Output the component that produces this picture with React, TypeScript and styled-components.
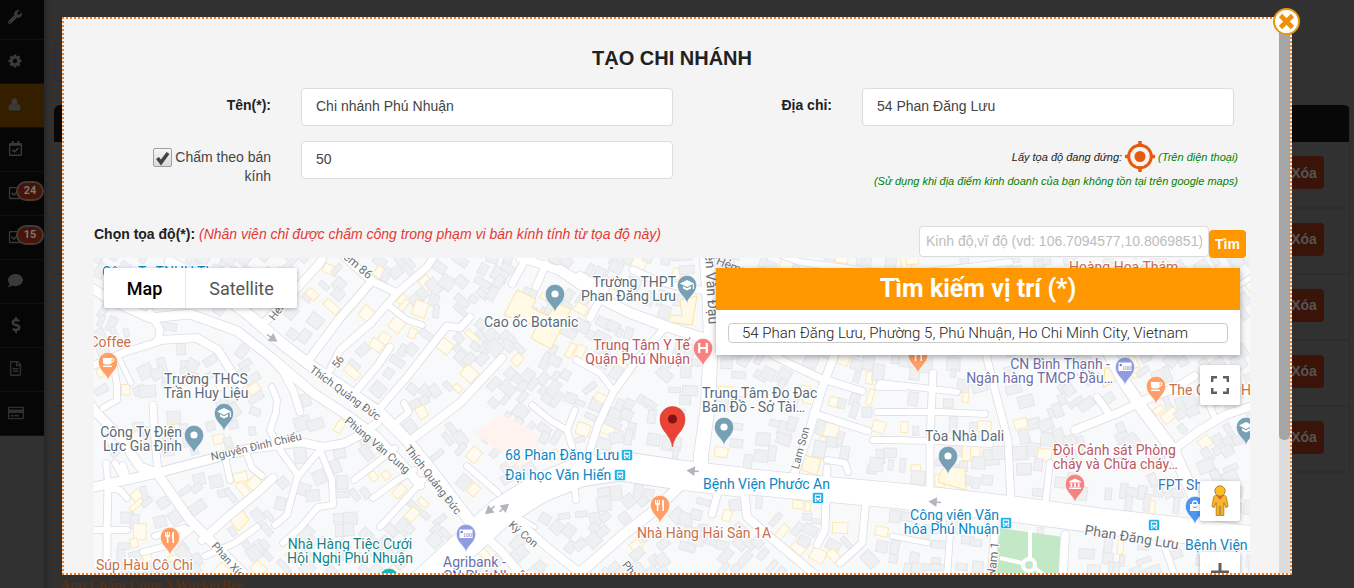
import React from "react";
import styled, { createGlobalStyle, css } from "styled-components";
import {
  FaWrench,
  FaRegCalendarCheck,
  FaRegCheckSquare,
  FaComment,
  FaDollarSign,
  FaRegFileAlt,
  FaRegCreditCard,
} from "react-icons/fa";

const sans = `"Liberation Sans", Arial, sans-serif`;
const roboto = `Roboto, "Noto Sans", sans-serif`;

const GlobalStyle = createGlobalStyle`
  * { box-sizing: border-box; }
  body {
    margin: 0;
    background: #313131;
    color: #212121;
    font-family: ${sans};
    font-size: 14px;
    overflow: hidden;
  }
  button, input { font-family: inherit; margin: 0; }
`;

/* ---------- dimmed page behind the dialog ---------- */

const Page = styled.div`
  display: flex;
  align-items: flex-start;
  min-height: 100vh;
`;

const Sidebar = styled.nav`
  flex: none;
  width: 44px;
  margin-top: -4px;
  background: #060606;
`;

const SideLink = styled.a<{ $active?: boolean; $faint?: boolean }>`
  position: relative;
  display: flex;
  align-items: center;
  height: 44px;
  padding: 0 0 2px 8px;
  border-bottom: 1px solid #101010;
  background: ${(p) => (p.$active ? "#331f00" : "transparent")};
  color: ${(p) => (p.$faint ? "#303030" : "#3a3a3a")};
  font-size: 14px;
`;

const Badge = styled.span`
  position: absolute;
  top: 9px;
  right: 0;
  width: 28px;
  height: 20px;
  border: 2px solid #443a36;
  border-radius: 10px;
  background: #461507;
  color: #777;
  font: bold 11px/16px ${roboto};
  text-align: center;
`;

const Main = styled.main`
  flex: 1;
  display: flex;
  flex-direction: column;
  padding: 43px 4px 0 10px;
  box-shadow: inset 5px 0 5px -3px #262626;
`;

const FilterBox = styled.div`
  width: 40%;
  height: 38px;
  margin-bottom: 24px;
  border: 1px solid #2a2a2f;
  border-radius: 4px;
`;

const PageTable = styled.table`
  width: 100%;
  border-collapse: collapse;
  border-right: 1px solid #2c2c2c;
`;

const HeadCell = styled.th`
  height: 37px;
  padding: 0;
  background: #080808;
  border-radius: 6px 6px 0 0;
`;

const PageCell = styled.td`
  height: 66px;
  padding: 0 25px 4px 0;
  border-bottom: 2px solid #2d2d2d;
  text-align: right;
`;

const DeleteButton = styled.button`
  width: 40px;
  height: 33px;
  padding: 0;
  border: 0;
  border-radius: 4px;
  background: #3a1408;
  color: #555;
  font-size: 14px;
  font-weight: bold;
`;

const AppName = styled.footer`
  margin-top: 104px;
  padding-left: 6px;
  color: #553117;
  font: bold 14px/18px "Liberation Serif", serif;
`;

/* ---------- dialog ---------- */

const Dialog = styled.section`
  position: fixed;
  inset: 17px 62px 13px;
  display: flex;
  border: 2px dotted #f0802a;
  background: #f4f4f4;
`;

const CloseButton = styled.button`
  position: absolute;
  top: -11px;
  right: -10px;
  display: grid;
  place-items: center;
  width: 27px;
  height: 27px;
  padding: 0;
  border: 2px solid #e8960f;
  border-radius: 50%;
  background: #fff;
`;

const Body = styled.div`
  flex: 1;
  min-width: 0;
  overflow: hidden;
  padding: 27px 29px 0 30px;
`;

const ScrollTrack = styled.div`
  flex: none;
  width: 11px;
  background: #dcdcdc;
`;

const ScrollThumb = styled.div`
  height: 76%;
  border-radius: 0 0 5px 5px;
  background: #a5a5a5;
`;

const Title = styled.h1`
  margin: 0 0 18px;
  font-size: 20px;
  line-height: 24px;
  text-align: center;
`;

const FormGrid = styled.form`
  display: grid;
  grid-template-columns: 177fr 372fr 129fr 372fr;
  gap: 15px 30px;
  padding-right: 16px;
`;

const FieldLabel = styled.label`
  padding-top: 8px;
  font-weight: bold;
  line-height: 18px;
  text-align: right;
`;

const CheckLabel = styled.label`
  display: flex;
  gap: 3px;
  justify-self: end;
  width: 118px;
  padding-top: 7px;
  color: #444;
  line-height: 19px;
  text-align: right;
`;

const CheckBox = styled.input`
  appearance: none;
  flex: none;
  width: 19px;
  height: 19px;
  border: 1px solid #a0a0a0;
  border-radius: 2px;
  background: url("data:image/svg+xml,%3Csvg xmlns='http://www.w3.org/2000/svg' viewBox='0 0 17 17'%3E%3Cpath d='M3.5 9l3.5 4.500L14 4' fill='none' stroke='%23424242' stroke-width='3.600'/%3E%3C/svg%3E"),
    linear-gradient(#f6f6f6, #d9d9d9);
`;

const inputFrame = css`
  border: 1px solid #dcdcdc;
  border-radius: 4px;
  background: #fff;
  outline: 0;
`;

const TextInput = styled.input`
  ${inputFrame}
  width: 100%;
  height: 38px;
  padding: 0 14px 2px;
  color: #444;
  font-size: 14px;
`;

const LocateHint = styled.div`
  grid-column: 3 / 5;
  margin-right: -4px;
  color: #008000;
  font-size: 11px;
  font-style: italic;
  line-height: 18px;
  text-align: right;
`;

const LocateRow = styled.div`
  display: flex;
  align-items: center;
  justify-content: flex-end;
  gap: 3px;
  height: 31px;
  color: #222;
`;

const LocateButton = styled.button`
  width: 30px;
  height: 31px;
  padding: 0;
  border: 0;
  background: none;
`;

const Green = styled.span`
  color: #008000;
`;

const CoordRow = styled.div`
  display: flex;
  align-items: flex-end;
  height: 32px;
  margin-top: 36px;
  padding-right: 4px;
`;

const CoordText = styled.p`
  flex: 1;
  align-self: flex-start;
  margin: 0;
  font-weight: bold;
  line-height: 16px;
`;

const Note = styled.em`
  color: #e53935;
  font-weight: normal;
`;

const CoordInput = styled.input`
  ${inputFrame}
  width: 290px;
  height: 31px;
  align-self: flex-start;
  padding: 0 6px 1px;
  font-size: 14px;
  &::placeholder { color: #bdbdbd; }
`;

const FindButton = styled.button`
  width: 37px;
  height: 28px;
  padding: 0;
  border: 0;
  border-radius: 4px;
  background: #ff9800;
  color: #fff;
  font-size: 14px;
  font-weight: bold;
`;

/* ---------- map ---------- */

const MapFrame = styled.div`
  position: relative;
  height: 380px;
  overflow: hidden;
  font-family: ${roboto};
`;

const MapCanvas = styled.svg`
  display: block;
  width: 100%;
  height: 100%;
  font-family: ${roboto};
`;

const MapTypes = styled.div`
  position: absolute;
  top: 10px;
  left: 10px;
  display: flex;
  height: 40px;
  border-radius: 2px;
  background: #fff;
  box-shadow: 0 1px 4px rgba(0, 0, 0, 0.3);
`;

const MapTypeButton = styled.button<{ $on?: boolean }>`
  width: ${(p) => (p.$on ? 82 : 111)}px;
  padding: 0;
  border: 0;
  border-right: ${(p) => (p.$on ? "1px solid #e6e6e6" : "0")};
  background: none;
  color: ${(p) => (p.$on ? "#000" : "#565656")};
  font-size: 18px;
  font-weight: ${(p) => (p.$on ? 500 : 400)};
`;

const SearchCard = styled.div`
  position: absolute;
  top: 10px;
  right: 10px;
  width: 524px;
  background: #fff;
  box-shadow: 0 2px 6px rgba(0, 0, 0, 0.35);
`;

const SearchTitle = styled.label`
  display: block;
  height: 42px;
  background: #ff9800;
  color: #fff;
  font-size: 25px;
  font-weight: 700;
  line-height: 42px;
  text-align: center;
`;

const SearchInput = styled.input`
  ${inputFrame}
  display: block;
  width: 500px;
  height: 20px;
  margin: 13px 12px 12px !important;
  padding: 0 13px;
  border-color: #ccc;
  color: #222;
  font-size: 15px;
  font-weight: 300;
`;

const MapTools = styled.div`
  position: absolute;
  top: 107px;
  right: 10px;
  display: flex;
  flex-direction: column;
`;

const ToolButton = styled.button<{ $gap?: number }>`
  display: grid;
  place-items: center;
  width: 40px;
  height: 40px;
  margin-top: ${(p) => p.$gap ?? 0}px;
  padding: 0;
  border: 0;
  border-radius: 2px;
  background: #fff;
  box-shadow: 0 1px 4px rgba(0, 0, 0, 0.3);
`;

type Pt = [number, number];
type Road = { w: number; p: Pt[] };

const r = (w: number, s: string): Road => ({
  w,
  p: s.split(" ").map((q) => q.split(",").map(Number) as Pt),
});

/* width followed by the polyline of each street */
const roads: Road[] = [
  r(29, "405,600 440,568 500,513 540,488 580,472 620,466 680,475 740,482"),
  r(25, "680,475 813,488 900,496 1013,509 1100,521 1180,530 1270,541"),
  r(9, "80,490 94,487 157,473 207,460 253,448 300,442"),
  r(8, "300,442 323,447 345,443 362,434 377,423"),
  r(11, "170,262 217,290 250,316 280,342 310,365 345,389 380,413 407,440 435,475 467,517 480,535"),
  r(9, "80,280 110,300 150,318 190,314 237,331 272,358 313,393 350,417 377,437 400,462 420,485"),
  r(7, "94,365 125,352 158,342 160,330 150,312"),
  r(8, "158,340 197,338 218,350 228,366 240,385"),
  r(7, "265,352 283,372 293,390 300,412"),
  r(6, "272,387 277,400 276,412 270,430 280,450 298,475 297,480"),
  r(9, "85,395 94,410 120,437 140,467 157,473 190,520 207,537 250,580 280,610"),
  r(7, "153,405 155,440 158,472"),
  r(6, "113,362 117,385 117,400 103,408"),
  r(5, "120,360 131,383"),
  r(7, "108,485 107,530 107,590"),
  r(6, "94,530 127,530"),
  r(6, "106,463 108,482"),
  r(6, "115,463 125,480 123,465 127,478"),
  r(6, "108,488 120,490 127,498"),
  r(8, "202,540 230,515 257,493 273,478"),
  r(6, "205,556 235,543 257,527"),
  r(6, "143,552 170,545 190,530"),
  r(6, "155,536 185,528"),
  r(6, "225,457 230,480"),
  r(6, "247,455 252,468 262,476"),
  r(7, "440,248 427,267 397,293 372,322 340,350 330,370"),
  r(8, "330,242 320,263 280,307 265,322"),
  r(8, "345,257 372,281 340,318 310,358"),
  r(7, "372,281 397,293"),
  r(6, "388,305 407,320 422,325"),
  r(7, "470,317 460,328 447,326 407,377 380,408"),
  r(7, "390,347 378,365 357,390"),
  r(8, "502,358 460,403 415,437"),
  r(6, "404,403 409,412 398,421"),
  r(7, "512,284 524,262"),
  r(7, "536,287 546,264"),
  r(8, "520,258 540,264 563,272 595,287"),
  r(7, "580,275 605,290 590,318"),
  r(10, "560,270 600,298 630,313 665,326 706,339"),
  r(7, "633,270 655,280 680,287 706,291"),
  r(14, "706,245 709,290 711,340 708,405 701,455 701,475"),
  r(7, "663,330 635,362 613,393 598,425 590,450"),
  r(6, "576,360 600,373 613,390"),
  r(6, "532,405 550,420 567,430 575,410"),
  r(6, "567,430 573,450 572,470 576,500"),
  r(6, "467,466 482,479 498,493"),
  r(6, "354,480 375,464 395,448"),
  r(6, "373,498 395,482 414,470"),
  r(6, "380,527 405,500 423,480"),
  r(6, "320,450 305,468 297,478 287,515 275,525"),
  r(6, "320,450 332,480 333,505 318,507 300,528 283,543"),
  r(8, "470,523 500,550 535,590"),
  r(8, "505,513 522,525 547,547 595,585"),
  r(4, "515,515 535,527"),
  r(10, "688,478 655,510 623,535 580,573"),
  r(8, "838,345 822,388 808,435 795,472"),
  r(7, "773,355 790,364 820,378 862,391"),
  r(7, "813,413 840,422 868,431"),
  r(6, "878,387 905,387"),
  r(6, "873,440 905,440"),
  r(6, "877,412 905,412"),
  r(8, "744,490 747,517 770,537 813,573"),
  r(7, "718,492 712,514"),
  r(7, "827,468 826,497 825,530 817,545"),
  r(6, "827,460 845,463 848,472"),
  r(7, "866,500 862,543 840,563"),
  r(7, "933,373 930,440 930,492"),
  r(6, "880,383 915,387 957,392"),
  r(6, "880,412 940,412 985,414"),
  r(6, "880,440 935,441 990,444"),
  r(7, "985,350 993,383 1008,440 1011,503"),
  r(6, "1050,463 1045,507"),
  r(8, "1075,430 1120,412 1145,400 1175,388 1195,376"),
  r(7, "1097,397 1110,415"),
  r(12, "1105,345 1123,380 1143,410 1173,450 1207,525"),
  r(8, "1173,450 1200,430 1225,415 1265,402"),
  r(6, "1205,395 1216,420"),
  r(7, "995,530 990,590"),
  r(6, "950,535 946,590"),
  r(5, "892,536 928,543"),
  r(8, "1065,535 1062,590"),
  r(6, "1165,548 1178,585"),
  r(5, "1250,278 1215,300 1180,340"),
  r(6, "740,240 800,262 900,275 1010,262"),
];

const toPath = (p: Pt[]) => "M" + p.map((q) => q.join(",")).join("L");

type House = { x: number; y: number; w: number; h: number; a: number; warm: boolean };

/* Houses stand in rows turned to face the nearest street. */
function buildHouses(): House[] {
  let seed = 77;
  const rnd = () => {
    seed = (seed * 1664525 + 1013904223) % 4294967296;
    return seed / 4294967296;
  };
  const out: House[] = [];
  for (let gy = 254; gy < 600; gy += 13) {
    for (let gx = 96; gx < 1260; gx += 12) {
      const x = gx + rnd() * 8;
      const y = gy + rnd() * 8;
      const w = 5 + rnd() * 9;
      const h = 8 + rnd() * 9;
      const keep = rnd();
      const tint = rnd();
      let best = 1e9;
      let angle = 0;
      for (const road of roads) {
        for (let i = 1; i < road.p.length; i++) {
          const [ax, ay] = road.p[i - 1];
          const dx = road.p[i][0] - ax;
          const dy = road.p[i][1] - ay;
          const t = Math.max(0, Math.min(1, ((x - ax) * dx + (y - ay) * dy) / (dx * dx + dy * dy)));
          const d = Math.hypot(x - ax - t * dx, y - ay - t * dy) - road.w / 2;
          if (d < best) {
            best = d;
            angle = (Math.atan2(dy, dx) * 180) / Math.PI;
          }
        }
      }
      if (best < 5 || keep < (best > 28 ? 0.65 : 0.3)) continue;
      out.push({ x, y, w, h, a: angle, warm: best < 13 && tint < 0.22 });
    }
  }
  return out;
}

const houses = buildHouses();

const C = {
  slate: "#5b6b77",
  orange: "#c8704c",
  red: "#b9595f",
  blue: "#0b87c4",
  shop: "#3b78b8",
  teal: "#148489",
  purple: "#6c6fa8",
  street: "#6b7075",
};

type Place = { x: number; y: number; c: string; lines: string[]; end?: boolean; mid?: boolean };

const places: Place[] = [
  { x: 131, y: 347, c: C.orange, lines: ["Coffee"], end: true },
  { x: 102, y: 277, c: C.blue, lines: ["Công Ty TNHH Th"] },
  { x: 206, y: 384, c: C.slate, lines: ["Trường THCS", "Trần Huy Liệu"], mid: true },
  { x: 182, y: 437, c: C.slate, lines: ["Công Ty Điện", "Lực Gia Định"], end: true },
  { x: 96, y: 570, c: C.orange, lines: ["Súp Hàu Cô Chi"] },
  { x: 484, y: 327, c: C.slate, lines: ["Cao ốc Botanic"] },
  { x: 676, y: 287, c: C.slate, lines: ["Trường THPT", "Phan Đăng Lưu"], end: true },
  { x: 690, y: 350, c: C.red, lines: ["Trung Tâm Y Tế", "Quận Phú Nhuận"], end: true },
  { x: 702, y: 398, c: C.slate, lines: ["Trung Tâm Đo Đac", "Bản Đồ - Sở Tài…"] },
  { x: 505, y: 460, c: C.blue, lines: ["68 Phan Đăng Lưu"] },
  { x: 505, y: 480, c: C.blue, lines: ["Đại học Văn Hiến"] },
  { x: 703, y: 489, c: C.blue, lines: ["Bệnh Viện Phước An"] },
  { x: 637, y: 538, c: C.orange, lines: ["Nhà Hàng Hải Sản 1A"] },
  { x: 350, y: 549, c: C.teal, lines: ["Nhà Hàng Tiệc Cưới", "Hội Nghị Phú Nhuận"], mid: true },
  { x: 443, y: 567, c: C.purple, lines: ["Agribank -", "CN Phú Nhuận"] },
  { x: 925, y: 441, c: C.slate, lines: ["Tòa Nhà Dali"] },
  { x: 1110, y: 369, c: C.purple, lines: ["CN Bình Thạnh -"], end: true },
  { x: 1113, y: 383, c: C.purple, lines: ["Ngân hàng TMCP Đầu…"], end: true },
  { x: 1053, y: 455, c: C.red, lines: ["Đội Cảnh sát Phòng", "cháy và Chữa cháy…"] },
  { x: 1158, y: 490, c: C.shop, lines: ["FPT Shop"] },
  { x: 1185, y: 550, c: C.blue, lines: ["Bệnh Viện"] },
  { x: 1169, y: 395, c: C.orange, lines: ["The Coffee House"] },
  { x: 999, y: 520, c: C.blue, lines: ["Công viên Văn", "hóa Phú Nhuận"], end: true },
  { x: 1069, y: 272, c: C.orange, lines: ["Hoàng Hoa Thám"] },
];

/* x, y, angle, name, text size: each name is centred on its point */
const streets: [number, number, number, string, number][] = [
  [286, 306, -52, "Hẻm 56", 11],
  [341, 364, -55, "56", 11],
  [352, 266, 40, "Hẻm 86", 12],
  [343, 396, 36, "Thích Quảng Đức", 11],
  [375, 448, 40, "Phùng Văn Cung", 11],
  [430, 482, 52, "Thích Quảng Đức", 11],
  [257, 450, -13, "Nguyễn Đình Chiểu", 11],
  [521, 537, 40, "Ký Con", 11],
  [236, 575, 49, "Phan Xích Long", 11],
  [804, 449, -75, "Lam Son", 11],
  [706, 273, 87, "Nguyễn Văn Đậu", 14],
  [738, 273, 22, "Hẻm 115", 12],
  [1131, 542, 9, "Phan Đăng Lưu", 14],
  [997, 560, -83, "Nam 1", 12],
  [636, 582, 50, "Phan Tây", 11],
];

type Kind = "dot" | "grad" | "cup" | "fork" | "bank" | "hospital" | "museum" | "bag" | "none";

const pinColor: Record<Kind, string> = {
  dot: "#78a0b4",
  grad: "#78a0b4",
  cup: "#ff9e67",
  fork: "#ff9e67",
  bank: "#909ce1",
  hospital: "#f88181",
  museum: "#f88181",
  bag: "#4b96f3",
  none: "#12b5c0",
};

const pins: [number, number, Kind][] = [
  [108, 362, "cup"],
  [224, 413, "grad"],
  [194, 435, "dot"],
  [170, 537, "fork"],
  [555, 294, "dot"],
  [687, 285, "grad"],
  [703, 348, "hospital"],
  [724, 427, "dot"],
  [660, 505, "fork"],
  [466, 534, "bank"],
  [948, 456, "dot"],
  [1075, 484, "museum"],
  [918, 355, "fork"],
  [1125, 367, "bank"],
  [1156, 386, "cup"],
  [1246, 427, "grad"],
  [1195, 506, "bag"],
  [389, 578, "none"],
];

const Glyph = ({ kind }: { kind: Kind }) => {
  switch (kind) {
    case "dot":
      return <circle r="3.600" fill="#fff" />;
    case "grad":
      return (
        <g fill="#fff">
          <path d="M-7-1.500L0-5L7-1.500L0 2z" />
          <path d="M-4 1.200L0 3.200L4 1.200V3.500L0 5.500L-4 3.500z" />
          <path d="M5.800-1h1.200v5h-1.200z" />
        </g>
      );
    case "cup":
      return (
        <g fill="#fff">
          <path d="M-5-4H3.500V0Q3.500 2.500 1 2.500H-2.500Q-5 2.500-5 0z" />
          <path d="M3-3.300h2q1 0 1 1.300t-1.500 1.600H3" fill="none" stroke="#fff" strokeWidth="1.100" />
          <path d="M-5 3.700H4V5H-5z" />
        </g>
      );
    case "fork":
      return (
        <g fill="#fff">
          <path d="M-5-5h1.200v3h.8v-3h1v3h.8v-3H0v3.500Q0 0-1.600.5V6h-1.600V.5Q-5 0-5-1.500z" />
          <path d="M2-3.500Q2-5 4-5.300V6H2.400V1H2z" />
        </g>
      );
    case "bank":
      return (
        <g>
          <rect x="-6.500" y="-4.500" width="13" height="8.500" fill="#fff" />
          <circle cx="-4.300" cy="-2" r="1.200" fill="#6f7bc9" />
          <text x="1.500" y="2.800" fontSize="6" textAnchor="middle" fill="#6f7bc9" fontFamily="Liberation Serif, serif">
            100
          </text>
        </g>
      );
    case "hospital":
      return <path d="M-3.800-5V5M3.800-5V5M-4 0H4" stroke="#fff" strokeWidth="2.200" fill="none" />;
    case "museum":
      return (
        <g fill="#fff">
          <path d="M-6-2.500L0-5.500L6-2.500V-1.500H-6z" />
          <path d="M-4.500-1h1.700v4h-1.700zM-.9-1H.9v4H-.9zM2.800-1h1.700v4H2.800zM-6 3.500H6V5H-6z" />
        </g>
      );
    case "bag":
      return (
        <g>
          <path d="M-5-2H5V5H-5z" fill="#fff" />
          <path d="M-2.400-2Q-2.400-5 0-5T2.400-2" fill="none" stroke="#fff" strokeWidth="1.300" />
          <path d="M-2 .5Q0 3 2 .5" fill="none" stroke="#4b96f3" strokeWidth="1.200" />
        </g>
      );
    default:
      return null;
  }
};

const BusStop = ({ x, y }: { x: number; y: number }) => (
  <g transform={`translate(${x} ${y})`}>
    <rect x="-5.500" y="-5.500" width="11" height="11" rx="1.500" fill="#1fb0e6" stroke="#fff" strokeWidth=".6" />
    <path d="M-3.200-3.500h6.400v6h-6.400z" fill="#fff" />
    <path d="M-2.200-2.300h4.400v2h-4.400zM-2.300.9h1.200v1h-1.200zM1.100.9h1.200v1H1.100z" fill="#1fb0e6" />
    <path d="M-3 2.500v1.500h1.400V2.500zM1.600 2.500v1.500H3V2.500z" fill="#fff" />
  </g>
);

const Arrow = ({ x, y, a }: { x: number; y: number; a: number }) => (
  <path
    transform={`translate(${x} ${y}) rotate(${a})`}
    d="M-6 0H2M-1-3.500L5 0L-1 3.500z"
    stroke="#b1b6bd"
    strokeWidth="1.600"
    fill="#b1b6bd"
  />
);

const MapDrawing = () => (
  <MapCanvas viewBox="94 258 1156 380" preserveAspectRatio="xMidYMin slice" role="img" aria-label="Bản đồ Phú Nhuận">
    <rect x="94" y="258" width="1156" height="380" fill="#f8f9fb" />
    {houses.map((h, i) => (
      <rect
        key={i}
        x={-h.w / 2}
        y={-h.h / 2}
        width={h.w}
        height={h.h}
        transform={`translate(${h.x} ${h.y}) rotate(${h.a})`}
        fill={h.warm ? "#fffbf0" : "#eff0f2"}
        stroke={h.warm ? "#fbe9b5" : "#e4e6ea"}
      />
    ))}
    <path d="M502,414L535,432L541,450L520,468L474,432z" fill="#fef3ee" />
    <g fill="#fff9e6" stroke="#fbe4a0">
      <path d="M517,290L536,299L532,308L548,316L556,303L571,309L551,349L531,338L537,326L504,315z" />
      <path d="M680,300L697,296L692,325L669,322L671,315L682,316z" />
      <path d="M940,473L945,467L965,468L966,490L938,482z" />
      <path d="M1105,368L1120,368L1124,376L1103,388z" />
      <path d="M804,455L821,459L817,475L802,470z" />
      <path d="M230,520L242,509L249,520L238,531z" />
    </g>
    <path d="M1000,528L1063,537L1058,590L994,590z" fill="#c3e8c6" />
    <g fill="none" stroke="#fff">
      <path d="M1030,530V558M1000,558L1022,563M1035,568L1062,590" strokeWidth="4" />
      <circle cx="1029" cy="565" r="6" strokeWidth="4" />
    </g>
    <g fill="none" strokeLinecap="round" strokeLinejoin="round">
      {roads.map((road, i) => (
        <path key={i} d={toPath(road.p)} stroke="#dcdee3" strokeWidth={road.w + 1.6} />
      ))}
      {roads.map((road, i) => (
        <path key={i} d={toPath(road.p)} stroke="#fff" strokeWidth={road.w} />
      ))}
    </g>
    <Arrow x={272} y={338} a={35} />
    <Arrow x={693} y={471} a={185} />
    <Arrow x={935} y={502} a={185} />
    <Arrow x={490} y={510} a={140} />
    <Arrow x={504} y={508} a={-40} />
    <g fill={C.street} stroke="#fff" strokeWidth="2" paintOrder="stroke" textAnchor="middle">
      {streets.map(([x, y, a, name, size], i) => (
        <text key={i} transform={`translate(${x} ${y}) rotate(${a})`} fontSize={size}>
          {name}
        </text>
      ))}
    </g>
    {pins.map(([x, y, kind], i) => (
      <g key={i} transform={`translate(${x} ${y})`}>
        <path
          d="M0 18.500C-1 12-9.700 8.500-9.700 0A9.700 9.700 0 0 1 9.700 0C9.700 8.500 1 12 0 18.500z"
          fill={pinColor[kind]}
          stroke="#fff"
          strokeWidth=".6"
        />
        <Glyph kind={kind} />
      </g>
    ))}
    <g fontSize="14" stroke="#fff" strokeWidth="2.500" strokeLinejoin="round" paintOrder="stroke">
      {places.map((p, i) => (
        <text key={i} fill={p.c} textAnchor={p.end ? "end" : p.mid ? "middle" : "start"}>
          {p.lines.map((line, n) => (
            <tspan key={n} x={p.x} y={p.y + n * 14}>
              {line}
            </tspan>
          ))}
        </text>
      ))}
    </g>
    <BusStop x={627} y={455} />
    <BusStop x={620} y={475} />
    <BusStop x={818} y={498} />
    <BusStop x={1154} y={525} />
    <BusStop x={1006} y={523} />
    <g transform="translate(672.500 419)">
      <path d="M0 28C-1.500 15-12.500 12.500-12.500 0A12.500 12.500 0 0 1 12.500 0C12.500 12.500 1.500 15 0 28z" fill="#ea4335" stroke="#d23a2d" strokeWidth=".6" />
      <circle r="4.600" fill="#811411" />
    </g>
  </MapCanvas>
);

const GearIcon = () => (
  <svg width="14" height="14" viewBox="-7 -7 14 14" fill="none" stroke="currentColor">
    <circle r="3.700" strokeWidth="3" />
    <path
      d="M0-6.500V-4M0 4V6.500M-6.500 0H-4M4 0H6.500M-4.600-4.600L-3-3M3 3L4.600 4.600M4.600-4.600L3-3M-3 3L-4.600 4.600"
      strokeWidth="2.600"
    />
  </svg>
);

const UserIcon = () => (
  <svg width="13" height="13" viewBox="0 0 13 13" fill="currentColor">
    <ellipse cx="6.500" cy="3.800" rx="3" ry="3.600" />
    <path d="M3.400 6Q6.500 9 9.600 6Q12.500 6.500 12.500 10.500Q12.500 12.500 10.500 12.500H2.500Q.5 12.500.5 10.500Q.5 6.500 3.400 6z" />
  </svg>
);

const sideItems = [
  { name: "Công cụ", icon: <FaWrench /> },
  { name: "Cài đặt", icon: <GearIcon /> },
  { name: "Nhân viên", icon: <UserIcon />, active: true },
  { name: "Lịch làm việc", icon: <FaRegCalendarCheck size={15} /> },
  { name: "Yêu cầu", icon: <FaRegCheckSquare />, badge: 24 },
  { name: "Phê duyệt", icon: <FaRegCheckSquare />, badge: 15 },
  { name: "Tin nhắn", icon: <FaComment size={15} /> },
  { name: "Lương", icon: <FaDollarSign size={16} /> },
  { name: "Báo cáo", icon: <FaRegFileAlt size={15} />, faint: true },
  { name: "Thanh toán", icon: <FaRegCreditCard size={16} />, faint: true },
];

export default function App() {
  return (
    <>
      <GlobalStyle />
      <Page>
        <Sidebar>
          {sideItems.map((item) => (
            <SideLink key={item.name} href="#" aria-label={item.name} $active={item.active} $faint={item.faint}>
              {item.icon}
              {item.badge && <Badge>{item.badge}</Badge>}
            </SideLink>
          ))}
        </Sidebar>
        <Main>
          <FilterBox />
          <PageTable>
            <thead>
              <tr>
                <HeadCell aria-label="Chi nhánh" />
              </tr>
            </thead>
            <tbody>
              {[1, 2, 3, 4, 5].map((n) => (
                <tr key={n}>
                  <PageCell>
                    <DeleteButton type="button">Xóa</DeleteButton>
                  </PageCell>
                </tr>
              ))}
            </tbody>
          </PageTable>
          <AppName>App Chấm Công XWorkerBee</AppName>
        </Main>
      </Page>

      <Dialog role="dialog" aria-labelledby="dialog-title">
        <Body>
          <Title id="dialog-title">TẠO CHI NHÁNH</Title>
          <FormGrid>
            <FieldLabel htmlFor="branch">Tên(*):</FieldLabel>
            <TextInput id="branch" defaultValue="Chi nhánh Phú Nhuận" />
            <FieldLabel htmlFor="address">Địa chỉ:</FieldLabel>
            <TextInput id="address" defaultValue="54 Phan Đăng Lưu" />
            <CheckLabel>
              <CheckBox type="checkbox" defaultChecked />
              Chấm theo bán kính
            </CheckLabel>
            <TextInput aria-label="Bán kính" defaultValue="50" />
            <LocateHint>
              <LocateRow>
                Lấy tọa độ đang đứng:
                <LocateButton type="button" aria-label="Lấy tọa độ">
                  <svg width="30" height="31" viewBox="-15 -15.500 30 31" fill="none" stroke="#e8590c">
                    <circle r="11.300" strokeWidth="3" />
                    <circle r="5.500" fill="#e8590c" stroke="none" />
                    <path d="M0-15.500V-10M0 10V15.500M-15 0H-10M10 0H15" strokeWidth="3.500" />
                  </svg>
                </LocateButton>
                <Green>(Trên điện thoại)</Green>
              </LocateRow>
              (Sử dụng khi địa điểm kinh doanh của bạn không tồn tại trên google maps)
            </LocateHint>
          </FormGrid>
          <CoordRow>
            <CoordText>
              Chọn tọa độ(*): <Note>(Nhân viên chỉ được chấm công trong phạm vi bán kính tính từ tọa độ này)</Note>
            </CoordText>
            <CoordInput aria-label="Kinh độ, vĩ độ" placeholder="Kinh độ,vĩ độ (vd: 106.7094577,10.8069851)" />
            <FindButton type="button">Tìm</FindButton>
          </CoordRow>
          <MapFrame>
            <MapDrawing />
            <MapTypes>
              <MapTypeButton type="button" $on>
                Map
              </MapTypeButton>
              <MapTypeButton type="button">Satellite</MapTypeButton>
            </MapTypes>
            <MapTools>
              <ToolButton type="button" aria-label="Fullscreen">
                <svg width="18" height="18" viewBox="0 0 18 18" fill="none" stroke="#5f5f5f" strokeWidth="2.400">
                  <path d="M1.200 6V1.200H6M12 1.200H16.800V6M16.800 12V16.800H12M6 16.800H1.200V12" />
                </svg>
              </ToolButton>
              <ToolButton type="button" aria-label="Street View" $gap={76}>
                <svg width="18" height="32" viewBox="0 0 18 32" stroke="#a87412" strokeWidth=".8">
                  <path d="M4.500 10.500H13.500Q15 10.500 15.500 12.500L17 21.500L14.800 22.500L12.800 17.500V30.500H9.600V21.500H8.400V30.500H5.200V17.500L3.200 22.500L1 21.500L2.500 12.500Q3 10.500 4.500 10.500z" fill="#f9b52c" />
                  <path d="M5.500 10.500H12.500L9 15z" fill="#d9632a" stroke="none" />
                  <circle cx="9" cy="6" r="5.200" fill="#fbbc2c" />
                </svg>
              </ToolButton>
              <ToolButton type="button" aria-label="Zoom in" $gap={31}>
                <svg width="18" height="18" viewBox="0 0 18 18">
                  <path d="M9 0V18M0 9H18" stroke="#5f5f5f" strokeWidth="3" />
                </svg>
              </ToolButton>
            </MapTools>
            <SearchCard>
              <SearchTitle htmlFor="place">Tìm kiếm vị trí (*)</SearchTitle>
              <SearchInput id="place" defaultValue="54 Phan Đăng Lưu, Phường 5, Phú Nhuận, Ho Chi Minh City, Vietnam" />
            </SearchCard>
          </MapFrame>
        </Body>
        <ScrollTrack>
          <ScrollThumb />
        </ScrollTrack>
        <CloseButton type="button" aria-label="Đóng">
          <svg width="17" height="17" viewBox="0 0 17 17">
            <path d="M2.500 2.500L14.500 14.500M14.500 2.500L2.500 14.500" stroke="#e8920f" strokeWidth="4.600" />
          </svg>
        </CloseButton>
      </Dialog>
    </>
  );
}
